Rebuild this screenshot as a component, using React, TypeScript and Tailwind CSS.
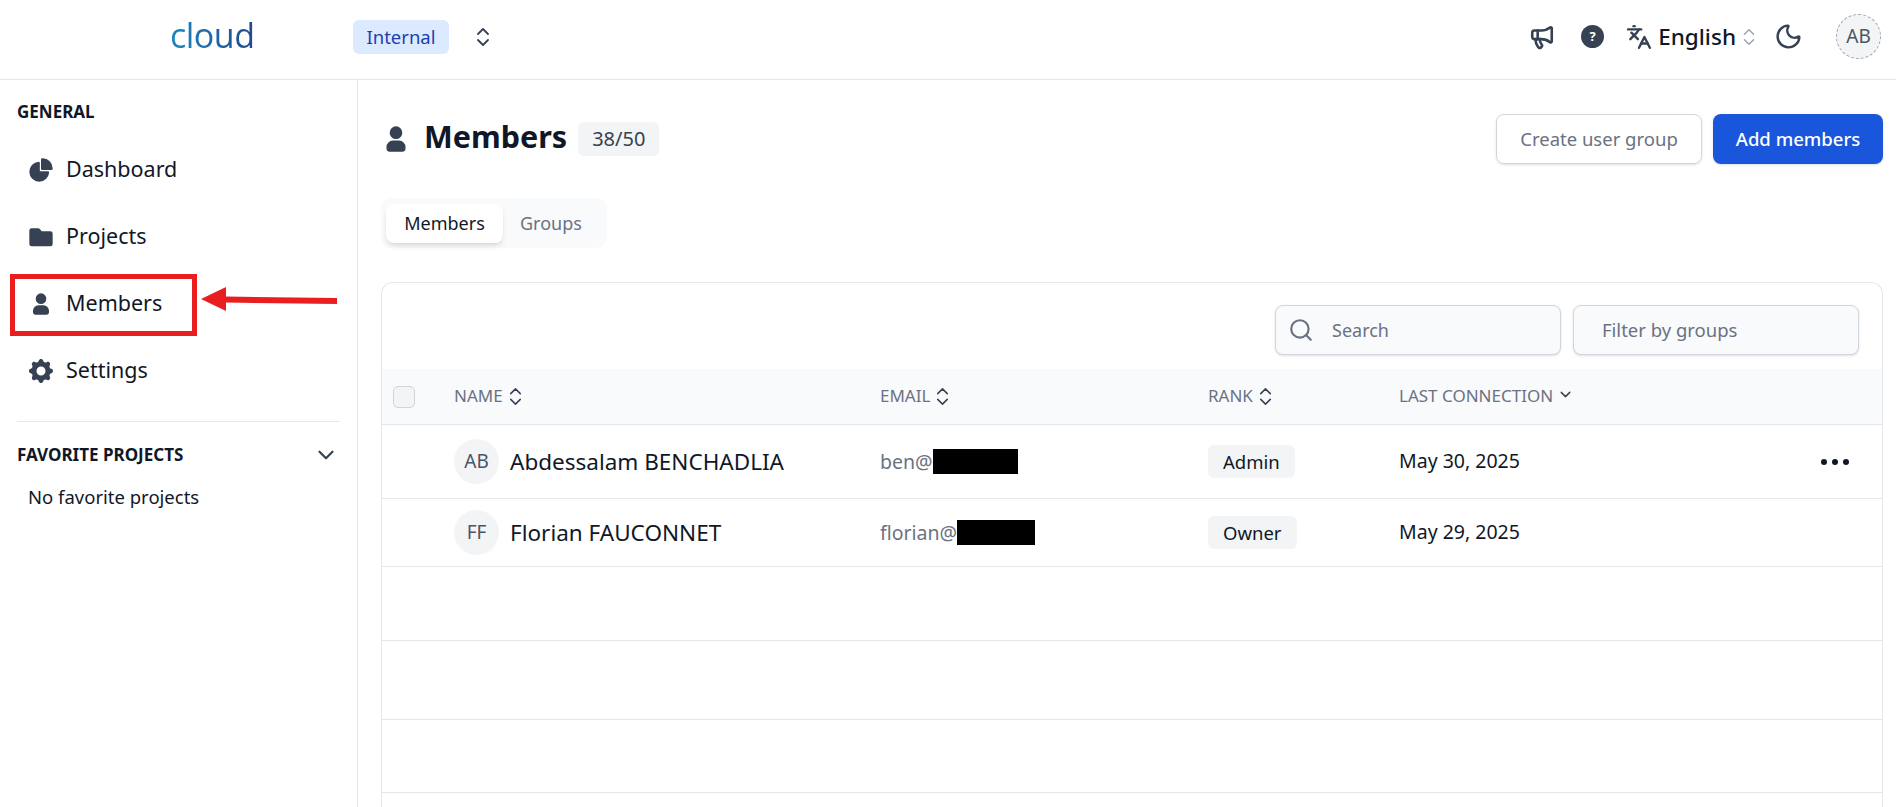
import { ChevronDown, ChevronsUpDown, Languages, Megaphone, Moon, Search } from "lucide-react";
import { HiCog } from "react-icons/hi";
import type { ReactNode } from "react";

const UserIcon = ({ className }: { className: string }) => (
  <svg viewBox="0 0 24 24" fill="currentColor" className={className}>
    <path d="M12 4a4 4 0 1 0 0 8 4 4 0 0 0 0-8Zm-2 9a4 4 0 0 0-4 4v1a2 2 0 0 0 2 2h8a2 2 0 0 0 2-2v-1a4 4 0 0 0-4-4h-4Z" />
  </svg>
);

const PieIcon = () => (
  <svg viewBox="0 0 24 24" fill="currentColor" className="w-[28px] h-[28px]">
    <path d="M13.5 2c-.178 0-.356.013-.492.022l-.074.005a1 1 0 0 0-.934.998V11a1 1 0 0 0 1 1h7.975a1 1 0 0 0 .998-.934l.005-.074A7.04 7.04 0 0 0 22 10.5 8.5 8.5 0 0 0 13.5 2Z" />
    <path d="M11 6.025a1 1 0 0 0-1.065-.998 8.5 8.5 0 1 0 9.038 9.039A1 1 0 0 0 17.975 13H11V6.025Z" />
  </svg>
);

const FolderIcon = () => (
  <svg viewBox="0 0 24 24" fill="currentColor" className="w-[28px] h-[28px]">
    <path d="M2 6.5a2 2 0 0 1 2-2h5.5a2 2 0 0 1 1.5.7L12.6 7H20a2 2 0 0 1 2 2v9a2 2 0 0 1-2 2H4a2 2 0 0 1-2-2V6.5Z" />
  </svg>
);

const navItems: { label: string; icon: ReactNode }[] = [
  { label: "Dashboard", icon: <PieIcon /> },
  { label: "Projects", icon: <FolderIcon /> },
  { label: "Members", icon: <UserIcon className="w-[32px] h-[32px]" /> },
  { label: "Settings", icon: <HiCog className="w-[30px] h-[30px]" /> },
];

const rowGrid = "grid grid-cols-[72px_426px_328px_192px_1fr] items-center";

const SortHead = ({ label }: { label: string }) => (
  <div className="flex items-center gap-[1px] text-[17px] text-gray-500">
    <span className="pb-[2px]">{label}</span>
    <ChevronsUpDown className="w-[23px] h-[23px] text-gray-700" strokeWidth={1.6} />
  </div>
);

const Sidebar = () => (
  <aside className="w-[358px] shrink-0 border-r border-gray-200 pt-[22px]">
    <p className="pl-[17px] h-[20px] leading-[20px] text-[17px] font-bold text-gray-900 mb-[14px]">GENERAL</p>
    <nav className="pl-[28px]">
      {navItems.map((item) => (
        <div key={item.label} className="relative flex items-center h-[67px] text-[21.5px] text-gray-900">
          <span className="w-[39px] flex justify-center text-gray-700 -ml-[7px] mr-[6px]">{item.icon}</span>
          {item.label}
          {item.label === "Members" && (
            <>
              <div className="absolute left-[-18px] top-[4px] w-[187px] h-[62px] border-[5px] border-[#e91f1f]" />
              <svg viewBox="0 0 140 28" className="absolute left-[170px] top-[15px] w-[142px] h-[28px]">
                <path d="M2 14 27 2v9.5l111 1.5v6L27 17.5V26Z" fill="#e91f1f" />
              </svg>
            </>
          )}
        </div>
      ))}
    </nav>
    <div className="mx-[17px] mt-[17px] border-t border-gray-200" />
    <div className="flex items-center justify-between pl-[17px] pr-[18px] mt-[23px] h-[20px]">
      <span className="text-[17px] font-bold text-gray-900">FAVORITE PROJECTS</span>
      <ChevronDown className="w-[26px] h-[26px] text-gray-700" />
    </div>
    <p className="pl-[28px] mt-[18px] text-[18.5px] text-gray-900">No favorite projects</p>
  </aside>
);

const MemberRow = ({ initials, name, email, redactWidth, rank, date, menu, className }: {
  initials: string; name: string; email: string; redactWidth: string; rank: string; date: string; menu?: boolean; className: string;
}) => (
  <div className={`${rowGrid} border-b border-gray-200 ${className}`}>
    <div />
    <div className="flex items-center gap-[11px]">
      <span className="w-[45px] h-[45px] rounded-full bg-gray-100 flex items-center justify-center text-[19px] text-gray-600">{initials}</span>
      <span className="text-[22.5px] text-gray-900">{name}</span>
    </div>
    <div className="flex items-center text-[19.5px] text-gray-500">
      {email}
      <span className={`h-[25px] bg-black ${redactWidth}`} />
    </div>
    <div>
      <span className="inline-flex items-center h-[33px] px-[15px] rounded-[6px] bg-gray-100 text-[18.5px] text-gray-900">{rank}</span>
    </div>
    <div className="flex items-center justify-between pr-[33px] text-[19.5px] text-gray-900 -ml-[1px]">
      <span className="pb-[2px]">{date}</span>
      {menu && (
        <span className="flex gap-[5px]">
          <i className="w-[6px] h-[6px] rounded-full bg-gray-900" />
          <i className="w-[6px] h-[6px] rounded-full bg-gray-900" />
          <i className="w-[6px] h-[6px] rounded-full bg-gray-900" />
        </span>
      )}
    </div>
  </div>
);

export default function App() {
  return (
    <div className="h-screen overflow-hidden bg-white flex flex-col font-['Noto_Sans',sans-serif]">
      <header className="h-[80px] shrink-0 border-b border-gray-200 flex items-center pb-[6px]">
        <span className="ml-[170px] w-[183px] text-[34px] leading-none pb-[4px] tracking-[-0.5px] font-['Open_Sans',sans-serif]">
          <span className="bg-gradient-to-r from-[#1a87c0] to-[#1f4a8c] bg-clip-text text-transparent">cloud</span>
        </span>
        <span className="w-[96px] h-[34px] rounded-[6px] bg-[#dbeafe] text-[#1e40af] text-[18.5px] flex items-center justify-center">Internal</span>
        <ChevronsUpDown className="ml-[22px] w-[24px] h-[24px] text-gray-700" strokeWidth={1.8} />
        <div className="ml-auto flex items-center pr-[15px]">
          <Megaphone className="w-[26px] h-[26px] text-gray-700" strokeWidth={2.4} />
          <span className="ml-[26px] w-[23px] h-[23px] rounded-full bg-gray-700 text-white text-[13px] font-bold flex items-center justify-center">?</span>
          <Languages className="ml-[22px] w-[26px] h-[26px] text-gray-700" strokeWidth={2.2} />
          <span className="ml-[6px] text-[22.5px] font-medium text-gray-900">English</span>
          <ChevronsUpDown className="ml-[2px] w-[22px] h-[22px] text-gray-400" strokeWidth={1.5} />
          <Moon className="ml-[14px] w-[29px] h-[29px] text-gray-700" strokeWidth={2} />
          <span className="ml-[33px] w-[45px] h-[45px] rounded-full bg-gray-100 border border-dashed border-gray-400 flex items-center justify-center text-[19px] text-gray-600">AB</span>
        </div>
      </header>

      <div className="flex flex-1 min-h-0">
        <Sidebar />
        <main className="flex-1 min-w-0 pl-[23px] pr-[13px] pt-[34px]">
          <div className="flex items-center justify-between h-[50px]">
            <div className="flex items-center">
              <UserIcon className="w-[38px] h-[38px] text-gray-700 -ml-[4px]" />
              <h1 className="ml-[9px] -mt-[4px] text-[30.5px] font-bold text-gray-900">Members</h1>
              <span className="ml-[11px] h-[34px] px-[14px] rounded-[6px] bg-gray-100 flex items-center text-[20px] text-gray-700">38/50</span>
            </div>
            <div className="flex gap-[11px]">
              <button className="w-[206px] h-[50px] rounded-[8px] border border-gray-300 shadow-sm text-[18.5px] text-gray-500">Create user group</button>
              <button className="w-[170px] h-[50px] rounded-[8px] bg-[#1a56db] shadow-sm text-[18.5px] font-medium text-white">Add members</button>
            </div>
          </div>

          <div className="mt-[34px] inline-flex items-center h-[50px] px-[5px] rounded-[10px] bg-gray-50">
            <span className="w-[117px] h-[39px] rounded-[8px] bg-white shadow-md flex items-center justify-center text-[18px] text-gray-900">Members</span>
            <span className="ml-[17px] mr-[20px] text-[18px] text-gray-500">Groups</span>
          </div>

          <section className="mt-[34px] border border-gray-200 rounded-t-[12px] border-b-0">
            <div className="h-[86px] pt-[22px] pr-[23px] flex justify-end gap-[12px]">
              <div className="w-[286px] h-[50px] rounded-[8px] border border-gray-300 bg-gray-50 flex items-center pl-[12px] shadow-sm">
                <Search className="w-[26px] h-[26px] text-gray-500" />
                <span className="ml-[18px] text-[18px] text-gray-500">Search</span>
              </div>
              <div className="w-[286px] h-[50px] rounded-[8px] border border-gray-300 bg-gray-50 flex items-center pl-[28px] shadow-sm">
                <span className="text-[18.5px] text-gray-500">Filter by groups</span>
              </div>
            </div>

            <div className={`${rowGrid} h-[56px] bg-gray-50 border-b border-gray-200`}>
              <div className="pl-[11px]">
                <span className="block w-[22px] h-[22px] rounded-[5px] border border-gray-300 bg-gray-100" />
              </div>
              <SortHead label="NAME" />
              <SortHead label="EMAIL" />
              <SortHead label="RANK" />
              <div className="flex items-center gap-[4px] text-[17px] text-gray-500 -ml-[1px]">
                <span className="pb-[2px]">LAST CONNECTION</span>
                <ChevronDown className="w-[17px] h-[17px] text-gray-700 mb-[4px]" strokeWidth={2} />
              </div>
            </div>

            <MemberRow className="h-[74px]" initials="AB" name="Abdessalam BENCHADLIA" email="ben@" redactWidth="w-[85px]" rank="Admin" date="May 30, 2025" menu />
            <MemberRow className="h-[68px]" initials="FF" name="Florian FAUCONNET" email="florian@" redactWidth="w-[78px]" rank="Owner" date="May 29, 2025" />
            <div className="h-[74px] border-b border-gray-200" />
            <div className="h-[79px] border-b border-gray-200" />
            <div className="h-[73px] border-b border-gray-200" />
            <div className="h-[80px]" />
          </section>
        </main>
      </div>
    </div>
  );
}
